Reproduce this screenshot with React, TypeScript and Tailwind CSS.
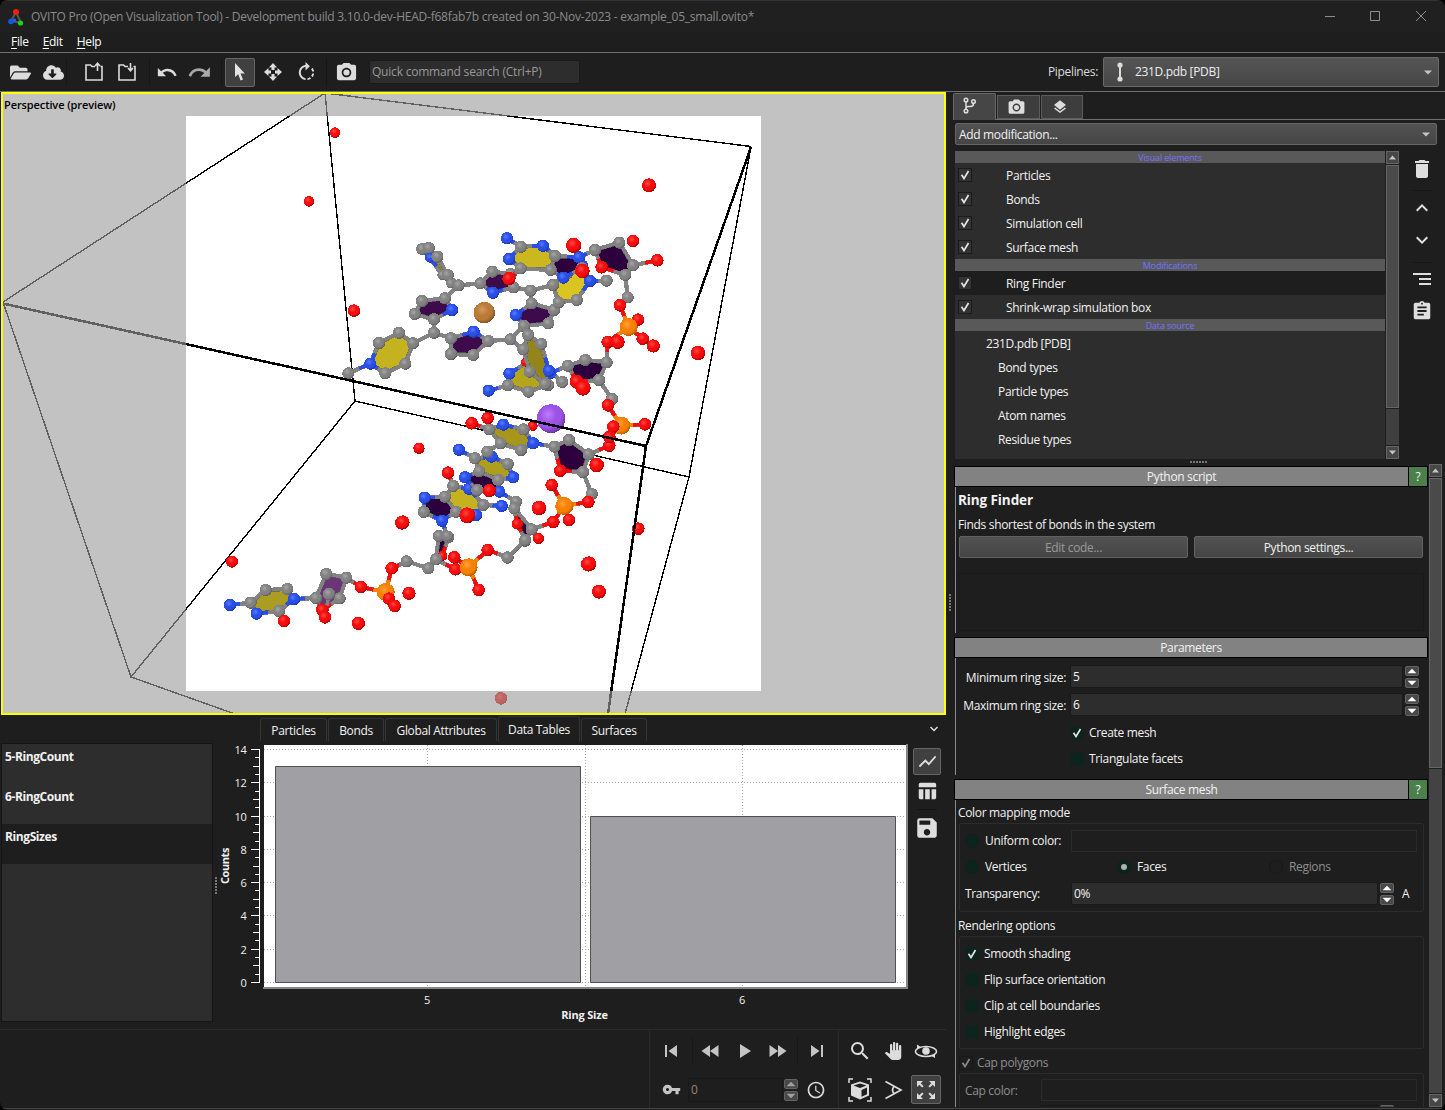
import React from "react";
import { FaFolderOpen, FaCloudDownloadAlt } from "react-icons/fa";
import {
  MdUndo, MdRedo, MdRotateRight, MdPhotoCamera, MdLayers, MdDelete, MdExpandLess, MdExpandMore,
  MdAssignment, MdShowChart, MdTableChart, MdSave, MdVpnKey, MdAccessTime, MdSearch, MdPanTool, MdZoomOutMap,
} from "react-icons/md";

/* ---------- molecule data ---------- */

const ELEMENTS: Record<string, { light: string; base: string; dark: string; r: number }> = {
  C: { light: "#a6a6a6", base: "#828282", dark: "#5e5e5e", r: 17.5 },
  N: { light: "#5a7cff", base: "#2a4ee8", dark: "#1c38ae", r: 17.5 },
  O: { light: "#ff4a44", base: "#f60c0c", dark: "#a80505", r: 18 },
  P: { light: "#ffa13c", base: "#f88000", dark: "#b85c00", r: 26 },
  Cu: { light: "#d69a58", base: "#b87a36", dark: "#7e5222", r: 31 },
  Na: { light: "#c07cff", base: "#9c52e4", dark: "#6a34a2", r: 42 },
};

type Fragment = { at: [number, number]; atoms: string; bonds: string; rings: string[] };

const FRAGMENTS: Fragment[] = [
  /* terminal cytidine and its backbone */
  {
    at: [210, 520],
    atoms:
      "N 60 255;C 122 248;C 167 210;C 232 207;C 207 273;N 140 281;N 252 237;O 222 303;C 318 234;O 337 270;C 349 162;C 389 235;C 409 173;C 357 222;O 345 292;O 453 201;O 545 145;C 590 124;C 655 145;P 527 216;O 537 236;O 554 258;O 597 220 19;O 445 310 19;O 66 125 17;O 576 8 20",
    bonds: "0-1 1-2 2-3 3-6 6-4 4-5 5-1 4-7 6-8 8-10 10-12 12-11 11-9 8-9 13-14 12-15 15-19 19-16 16-17 17-18 19-20 19-21 11-13",
    rings: ["#ab9c22 1 2 3 6 4 5", "#6a3678 8 10 12 11 9"],
  },
  {
    at: [210, 520],
    atoms:
      "C 655 145;O 697 108 14;C 715 52;C 687 48;C 678 118;O 736 148;O 733 112;P 776 142;O 806 210;O 833 90;C 893 112;C 945 62",
    bonds: "0-4 1-2 2-3 3-4 1-4 4-5 5-7 6-7 7-8 7-9 9-10 10-11",
    rings: ["#2c003c 2 3 4 1"],
  },
  /* lower stacked guanine */
  {
    at: [400, 400],
    atoms:
      "O 144 218;C 160 258;N 207 266;C 250 315;N 305 318;N 228 345;C 168 335;C 135 290;N 74 293;C 71 336;N 126 362;C 142 408 16",
    bonds: "0-1 1-2 2-3 3-4 3-5 5-6 6-7 7-1 7-8 8-9 9-10 10-6 10-11",
    rings: ["#c4b21e 1 2 3 5 6 7", "#2c003c 7 8 9 10 6"],
  },
  {
    at: [400, 400],
    atoms:
      "O 352 372 16;C 348 305;C 343 325;C 376 420;C 395 388;O 460 366;C 322 473;O 415 415 16;N 298 275",
    bonds: "8-1 1-2 2-0 0-3 3-4 4-2 4-5 3-6",
    rings: ["#2c003c 2 4 3 0"],
  },
  /* middle stacked adenine */
  {
    at: [400, 400],
    atoms:
      "N 177 149;C 225 175;N 275 170;C 323 192;N 340 232;C 295 240;C 238 214;N 195 232;C 232 270;N 298 275;O 268 272 19;O 202 346 23;O 8 367 20",
    bonds: "0-1 1-2 2-3 3-4 4-5 5-6 6-1 6-7 7-8 8-9 9-5",
    rings: ["#ad9e1e 1 2 3 4 5 6", "#2c003c 6 7 8 9 5"],
  },
  /* upper cytosine with sugar and phosphates */
  {
    at: [400, 400],
    atoms:
      "O 398 78 14;O 215 70;C 268 88;N 310 74;C 371 88;C 302 130;C 363 150;N 400 130;C 262 155;O 263 54;C 463 140;O 481 212;C 507 120;C 549 216;C 566 163;O 628 137;C 575 282;O 565 306;P 493 318;O 455 255;O 507 360;O 460 366;O 590 195 21;O 417 324 21;O 57 145 16",
    bonds: "0-4 1-2 2-3 3-4 4-7 7-6 6-5 5-2 5-8 7-10 10-12 12-14 14-13 13-11 11-10 14-15 13-16 16-17 17-18 18-19 18-20 18-21",
    rings: ["#a6971c 2 3 4 7 6 5", "#2c003c 10 12 14 13 11"],
  },
  /* lower right nucleotide of the upper strand */
  {
    at: [480, 220],
    atoms:
      "N 26 512;N 88 461;C 84 496;C 140 428 14;C 204 495;C 145 515;N 210 460;C 264 437;O 290 485 20;C 316 420;C 380 427;C 357 480;O 309 504 22;C 396 537;O 384 556;O 495 613;P 424 617;O 400 620;O 388 651;O 383 366;O 136 427 12",
    bonds: "0-2 1-2 1-3 3-6 6-4 4-5 5-2 6-7 7-9 9-10 10-11 11-8 8-7 11-13 13-14 14-16 16-15 16-17 16-18 10-19",
    rings: ["#b5a51c 2 1 3 6 4 5", "#2c003c 7 9 10 11 8"],
  },
  /* pyridyl on the right */
  {
    at: [480, 220],
    atoms: "C 262 160;N 308 135 15;C 219 195;C 236 247;C 290 240;N 330 183;C 380 182",
    bonds: "0-2 2-3 3-4 4-5 5-1 1-0 5-6",
    rings: ["#d8c522 0 2 3 4 5 1"],
  },
  /* porphyrin core */
  {
    at: [340, 220],
    atoms:
      "C 25 460;N 91 431;C 117 369;C 177 338;C 219 370;C 196 431;C 136 460;C 282 338;C 282 298;C 224 282;C 246 243;C 315 235;N 336 270;C 356 196;C 421 190;C 457 155;C 512 162;C 521 202;N 459 218;C 333 355;N 401 335;C 445 363;C 400 405;C 333 402;C 511 358;C 572 212;C 575 250;N 527 285;C 642 270;C 625 310;C 552 318;C 639 195;C 656 247",
    bonds:
      "0-1 1-2 2-3 3-4 4-5 5-6 6-1 4-7 7-8 8-9 9-10 10-11 11-12 12-8 11-13 13-14 14-15 15-16 16-17 17-18 18-14 7-19 19-20 20-21 21-22 22-23 23-19 21-24 17-25 25-26 26-27 26-28 28-29 29-30 30-27 30-24 25-31 32-28",
    rings: [
      "#c4b21e 1 2 3 4 5 6", "#3d0a4c 8 9 10 11 12", "#3d0a4c 14 15 16 17 18", "#3d0a4c 19 20 21 22 23", "#3d0a4c 26 27 30 29 28",
    ],
  },
  {
    at: [340, 220],
    atoms: "C 247 87;C 266 84;N 270 113 14;C 292 110;C 307 165 14;C 323 165;C 333 190 14;C 356 196",
    bonds: "0-1 0-2 1-3 2-4 3-5 4-5 5-7 6-7",
    rings: ["#9c8c16 2 3 5 4"],
  },
  /* guanosine at the top */
  {
    at: [480, 220],
    atoms:
      "N 81 55;C 123 80;N 189 77;C 225 108;C 212 150;C 122 145;N 87 117;O 87 176 19;N 297 112;C 306 145;N 250 173;C 345 90;O 365 142;C 436 165;C 418 68;C 459 136;O 532 121;C 443 232;O 420 256;O 474 299;P 446 321;O 488 356;O 383 366;O 413 366 20;O 520 378 19;O 281 76 22;O 459 63;O 307 153 21",
    bonds: "0-1 1-2 2-3 3-4 4-5 5-6 6-1 5-7 3-8 8-9 9-10 10-4 8-11 11-14 14-15 15-13 13-12 12-11 15-16 13-17 17-18 18-20 20-19 20-21 20-22",
    rings: ["#cab81e 1 2 3 4 5 6", "#2c003c 3 8 9 10 4", "#2c003c 11 14 15 13 12"],
  },
  /* pyridyl seen edge-on */
  {
    at: [480, 220],
    atoms: "C 91 358;C 130 388;C 145 345;C 184 372;C 149 455;C 195 492;N 207 452;C 247 486",
    bonds: "0-1 1-2 2-3 3-6 6-5 5-4 4-1 6-7",
    rings: ["#94851a 1 2 3 6 5 4"],
  },
  /* free ions and solvent */
  {
    at: [0, 0],
    atoms:
      "Cu 1453 938;Na 1653 1256;O 1005 398 15;O 927 604 15;O 1947 556 20;O 1062 932;O 2094 1059 21;O 1797 1775 20;O 1766 1692 22;O 1915 1586;O 1503 2095 18;O 1257 1344 15",
    bonds: "",
    rings: [],
  },
];

function parseAtoms(source: string) {
  return source.split(";").map((entry) => {
    const [el, x, y, r] = entry.split(" ");
    return { el, x: Number(x), y: Number(y), r: r ? Number(r) : ELEMENTS[el].r };
  });
}

function MoleculeFragment({ fragment }: { fragment: Fragment }) {
  const atoms = parseAtoms(fragment.atoms);
  const bonds = fragment.bonds ? fragment.bonds.split(" ").map((b) => b.split("-").map(Number)) : [];
  return (
    <g transform={`translate(${fragment.at[0]} ${fragment.at[1]}) scale(0.33333)`}>
      {fragment.rings.map((ring, i) => {
        const [fill, ...ids] = ring.split(" ");
        return <polygon key={i} fill={fill} points={ids.map((id) => `${atoms[+id].x},${atoms[+id].y}`).join(" ")} />;
      })}
      {bonds.map(([a, b], i) => {
        const p = atoms[a], q = atoms[b];
        const mx = (p.x + q.x) / 2, my = (p.y + q.y) / 2;
        return (
          <g key={i}>
            <g strokeWidth="13" strokeOpacity="0.75">
              <line x1={p.x} y1={p.y} x2={mx} y2={my} stroke={ELEMENTS[p.el].dark} />
              <line x1={mx} y1={my} x2={q.x} y2={q.y} stroke={ELEMENTS[q.el].dark} />
            </g>
            <line x1={p.x} y1={p.y} x2={mx} y2={my} stroke={ELEMENTS[p.el].base} strokeWidth="10" />
            <line x1={mx} y1={my} x2={q.x} y2={q.y} stroke={ELEMENTS[q.el].base} strokeWidth="10" />
          </g>
        );
      })}
      {atoms.map((a, i) => (
        <circle key={i} cx={a.x} cy={a.y} r={a.r + 1} fill={`url(#atom-${a.el})`} />
      ))}
    </g>
  );
}

function Viewport() {
  return (
    <div className="relative ml-px h-[623px] w-[945px] border-2 border-[#ffff00] bg-white">
      <svg className="block h-[619px] w-[941px]" viewBox="3 94 941 619" shapeRendering="crispEdges">
        <defs>
          {Object.entries(ELEMENTS).map(([el, c]) => (
            <radialGradient key={el} id={`atom-${el}`} cx="0.4" cy="0.36" r="0.66">
              <stop offset="0" stopColor={c.light} />
              <stop offset="0.45" stopColor={c.base} />
              <stop offset="0.7" stopColor={c.base} />
              <stop offset="1" stopColor={c.dark} />
            </radialGradient>
          ))}
        </defs>
        <g stroke="#000" strokeWidth="1.4" fill="none">
          <path d="M3 302L325 93L751 146.500M325 93L355 401L689 477L751 147M3 302L131 677L355 401M131 677L235 714M689 477L625 714" />
        </g>
        {FRAGMENTS.map((f, i) => (
          <MoleculeFragment key={i} fragment={f} />
        ))}
        <path d="M3 303.500L646 446L751 147M646 446L608 714" stroke="#000" strokeWidth="2.500" fill="none" />
        <path d="M3 94H944V713H3ZM186 116V691H761V116Z" fillRule="evenodd" fill="rgba(156,156,156,0.616)" />
      </svg>
      <span className="absolute left-[1px] top-[3px] text-[11px] font-semibold leading-4 tracking-[-0.100px] text-black">
        Perspective (preview)
      </span>
    </div>
  );
}

/* ---------- small widgets ---------- */

function Check({ on, tone = "list" }: { on?: boolean; tone?: "list" | "green" | "off" }) {
  const bg =
    tone === "green" ? "bg-[#0b241e] border-[#16201d]" : tone === "off" ? "bg-[#1e1e1e] border-[#191919]" : "bg-[#333] border-[#1b1b1b]";
  return (
    <span className={`flex size-[14px] shrink-0 items-center justify-center border ${bg}`}>
      {on && (
        <svg width="10" height="10" viewBox="0 0 10 10">
          <path d="M1.500 4.800L4 8.500L8.500 1" fill="none" stroke={tone === "off" ? "#8a8a8a" : "#e4e4e4"} strokeWidth="1.700" />
        </svg>
      )}
    </span>
  );
}

function Radio({ on, off }: { on?: boolean; off?: boolean }) {
  return (
    <span
      className={`flex size-[14px] shrink-0 items-center justify-center rounded-full border ${
        off ? "border-[#191919] bg-[#1e1e1e]" : "border-[#12201c] bg-[#0b241e]"
      }`}
    >
      {on && <span className="size-[6px] rounded-full bg-[#a9b3b0]" />}
    </span>
  );
}

function Spin({ dim }: { dim?: boolean }) {
  const fill = dim ? "#a0a0a0" : "#fff";
  return (
    <span className="flex w-[14px] shrink-0 flex-col gap-[2px]">
      {["M1 7L6 2L11 7Z", "M1 2L6 7L11 2Z"].map((d) => (
        <span key={d} className="flex h-[10px] items-center justify-center rounded-[2px] border border-[#636363] bg-[#484848]">
          <svg width="12" height="8" viewBox="0 0 12 9"><path d={d} fill={fill} /></svg>
        </span>
      ))}
    </span>
  );
}

function ScrollBtn({ down }: { down?: boolean }) {
  return (
    <span className="flex size-[13px] shrink-0 items-center justify-center border border-[#666] bg-[#474747]">
      <svg width="7" height="5" viewBox="0 0 7 5"><path d={down ? "M0 .5H7L3.500 4.500Z" : "M0 4.500H7L3.500 .5Z"} fill="#c4c4c4" /></svg>
    </span>
  );
}

function Caret() {
  return <svg width="8" height="5" viewBox="0 0 8 5"><path d="M0 .5H8L4 4.500Z" fill="#c4c4c4" /></svg>;
}

function Grip({ vertical }: { vertical?: boolean }) {
  return (
    <span className={`flex gap-px ${vertical ? "flex-col" : ""}`}>
      {[0, 1, 2, 3, 4, 5].map((i) => <span key={i} className="size-[2px] bg-[#777]" />)}
    </span>
  );
}

function Sep({ className = "" }: { className?: string }) {
  return <span className={`h-7 w-px shrink-0 bg-[#171717] ${className}`} />;
}

function Slot({ w, children }: { w: string; children: React.ReactNode }) {
  return <span className={`flex h-full shrink-0 items-center justify-center ${w}`}>{children}</span>;
}

/* ---------- header bars ---------- */

function TitleBar() {
  return (
    <div className="flex h-[31px] items-center bg-[#202020] text-[#8b8b8b]">
      <svg className="ml-2" width="16" height="18" viewBox="0 0 16 18">
        <path d="M8 4L3 13L13 15Z" stroke="#555" strokeWidth="2" fill="none" />
        <circle cx="8" cy="4" r="3" fill="#f21d0c" />
        <circle cx="3" cy="13.500" r="2.800" fill="#0a5cf0" />
        <circle cx="12.500" cy="15" r="2.600" fill="#17d61c" />
        <circle cx="6.500" cy="12" r="1.600" fill="#2a62e0" />
      </svg>
      <span className="ml-[7px] grow tracking-[-0.235px]">
        OVITO Pro (Open Visualization Tool) - Development build 3.10.0-dev-HEAD-f68fab7b created on 30-Nov-2023 - example_05_small.ovito*
      </span>
      <svg className="mb-[2px] mr-[17px]" width="104" height="12" viewBox="0 0 104 12" fill="none" stroke="#8e8e8e">
        <path d="M1 6.500H11M46.500 1.500H55.500V10.500H46.500ZM92 1L102 11M102 1L92 11" />
      </svg>
    </div>
  );
}

function ArrowFolder({ down }: { down?: boolean }) {
  return (
    <svg width="20" height="20" viewBox="0 0 20 20" fill="none" stroke="#dcdcdc" strokeWidth="1.600">
      <path d="M11 4.500H8L6.500 3H2V18H18V4.500H16.500" />
      <path d={down ? "M13.500 1V8.500M11 6L13.500 8.700L16 6" : "M13.500 9V1.500M11 4L13.500 1.300L16 4"} />
    </svg>
  );
}

function Toolbar() {
  return (
    <div className="flex h-[39px] items-center border-t border-[#6e6e6e] text-[#dcdcdc]">
      <Slot w="w-[41px]"><FaFolderOpen size={21} /></Slot>
      <Slot w="w-[25px]"><FaCloudDownloadAlt size={21} /></Slot>
      <Sep className="mr-4" />
      <Slot w="w-[22px]"><ArrowFolder /></Slot>
      <Slot w="w-[44px]"><ArrowFolder down /></Slot>
      <Sep className="mr-[6px]" />
      <Slot w="w-[22px]"><MdUndo size={25} /></Slot>
      <Slot w="w-[43px]"><MdRedo size={25} className="text-[#a8a8a8]" /></Slot>
      <Sep className="mr-[3px]" />
      <span className="flex h-[29px] w-[30px] items-center justify-center rounded-[2px] border border-[#666] bg-[#404040]">
        <svg width="12" height="18" viewBox="0 0 12 18"><path d="M1 0V14L4.200 11.200L6.600 17.500L9 16.500L6.500 10.500H10.800Z" fill="#e4e4e4" /></svg>
      </span>
      <Slot w="w-[36px]">
        <svg width="20" height="20" viewBox="0 0 20 20" fill="#dcdcdc">
          <path d="M10 1L14 5.500H11.500V8H8.500V5.500H6ZM10 19L6 14.500H8.500V12H11.500V14.500H14ZM1 10L5.500 6V8.500H8V11.500H5.500V14ZM19 10L14.500 14V11.500H12V8.500H14.500V6Z" />
        </svg>
      </Slot>
      <Slot w="w-[30px]"><MdRotateRight size={23} /></Slot>
      <Sep className="ml-[5px]" />
      <Slot w="w-[32px]"><MdPhotoCamera size={23} className="ml-[6px]" /></Slot>
      <div className="ml-[10px] flex h-6 w-[211px] items-center rounded-[2px] border border-[#191919] bg-[#2d2d2d] pl-[2px] tracking-[-0.210px] text-[#999]">
        Quick command search (Ctrl+P)
      </div>
      <span className="grow" />
      <span className="mr-[5px]">Pipelines:</span>
      <div className="mr-[6px] flex h-[30px] w-[336px] items-center rounded-[2px] border border-[#6a6a6a] bg-linear-to-b from-[#555] to-[#464646] pl-[13px] pr-[6px] text-[#eee]">
        <svg width="6" height="20" viewBox="0 0 6 20" fill="#ddd"><circle cx="3" cy="3" r="2.600" /><circle cx="3" cy="17" r="2.600" /><path d="M2 3H4V17H2Z" /></svg>
        <span className="ml-3 grow">231D.pdb [PDB]</span>
        <Caret />
      </div>
    </div>
  );
}

/* ---------- data inspector ---------- */

const TICKS = Array.from({ length: 29 }, (_, i) => i);

function Plot() {
  const y = (v: number) => Math.round(982 - v * 16.640) + 0.5;
  return (
    <svg className="block h-[284px] w-[692px] shrink-0" viewBox="218 742 692 284" fontSize="11" fill="#f0f0f0">
      <rect x="264" y="745" width="642" height="242" fill="#fff" />
      <path d="M263 988H907V744" fill="none" stroke="#858585" strokeWidth="2" />
      <g stroke="#a0a0a0" strokeDasharray="1 2" shapeRendering="crispEdges">
        {[0, 2, 4, 6, 8, 10, 12, 14].map((v) => <path key={v} d={`M264 ${y(v)}H905`} />)}
        <path d="M427.500 745V986M585.500 745V986M742.500 745V986" />
      </g>
      <g fill="#a09fa4" stroke="#505050">
        <path d="M275.500 766.500H580.500V982.500H275.500ZM590.500 816.500H895.500V982.500H590.500Z" />
      </g>
      <g stroke="#fff" shapeRendering="crispEdges">
        <path d="M259.500 749V983" />
        {TICKS.map((i) => (
          <path key={i} d={`M${i % 4 === 0 ? 251 : i % 2 === 0 ? 253 : 255} ${y(i / 2)}H259`} />
        ))}
      </g>
      {[0, 2, 4, 6, 8, 10, 12, 14].map((v) => (
        <text key={v} x="246.500" y={y(v) + 4.500} textAnchor="end">{v}</text>
      ))}
      <text x="427" y="1004" textAnchor="middle">5</text>
      <text x="742" y="1004" textAnchor="middle">6</text>
      <text x="584.500" y="1019" textAnchor="middle" fontWeight="700" letterSpacing="-0.2">Ring Size</text>
      <text transform="translate(229 866) rotate(-90)" textAnchor="middle" fontWeight="700" letterSpacing="-0.4">Counts</text>
    </svg>
  );
}

function InspectorTab({ label, w, active }: { label: string; w: string; active?: boolean }) {
  return (
    <div
      className={`flex items-center justify-center rounded-t-[3px] border border-b-0 border-[#343434] ${w} ${
        active ? "h-[26px] self-start" : "mb-px h-[23px] pt-px"
      }`}
    >
      {label}
    </div>
  );
}

function DataInspector() {
  return (
    <div className="flex h-[314px] flex-col">
      <div className="flex h-[27px] items-end gap-px pl-[260px] pt-px">
        <InspectorTab label="Particles" w="w-[67px]" />
        <InspectorTab label="Bonds" w="w-[56px]" />
        <InspectorTab label="Global Attributes" w="w-[112px]" />
        <InspectorTab label="Data Tables" w="w-[82px]" active />
        <InspectorTab label="Surfaces" w="w-[66px]" />
        <span className="grow" />
        <svg className="mb-[9px] mr-[7px]" width="10" height="8" viewBox="0 0 10 8"><path d="M1.500 2L5 5.500L8.500 2" stroke="#ddd" strokeWidth="1.500" fill="none" /></svg>
      </div>
      <div className="flex grow">
        <div className="ml-px mt-px flex h-[279px] w-[212px] flex-col border border-[#151515] bg-[#2d2d2d] font-bold tracking-[-0.400px]">
          {["5-RingCount", "6-RingCount", "RingSizes"].map((name, i) => (
            <div key={name} className={`h-10 pl-[3px] pt-1 leading-[18px] ${i === 2 ? "bg-[#1e1e1e]" : ""}`}>{name}</div>
          ))}
        </div>
        <div className="flex w-[5px] shrink-0 items-center justify-center"><Grip vertical /></div>
        <Plot />
        <div className="ml-[3px] mt-[6px] flex flex-col items-center text-[#dedede]">
          <span className="flex h-[27px] w-[28px] items-center justify-center rounded-[2px] border border-[#666] bg-[#404040]">
            <MdShowChart size={21} />
          </span>
          <MdTableChart size={22} className="mt-[5px]" />
          <span className="mt-[7px] h-px w-5 bg-[#151515]" />
          <MdSave size={26} className="mt-[5px]" />
        </div>
      </div>
    </div>
  );
}

/* ---------- animation and viewport controls ---------- */

function PlayGlyph({ d }: { d: string }) {
  return <svg width="18" height="14" viewBox="0 0 18 14"><path d={d} fill="#c4c4c4" /></svg>;
}

function BottomBar() {
  return (
    <div className="flex h-[79px] border-t border-[#2b2b2b]">
      <div className="w-[650px] border-r border-[#2b2b2b]" />
      <div className="w-[189px] border-r border-[#2b2b2b] text-[#c4c4c4]">
        <div className="flex h-[41px] items-center">
          <Slot w="w-[42px]"><PlayGlyph d="M3 1H5V13H3ZM15 1V13L6.500 7Z" /></Slot>
          <Sep className="h-5" />
          <Slot w="w-[34px]"><PlayGlyph d="M9 1V13L.5 7ZM17.500 1V13L9 7Z" /></Slot>
          <Slot w="w-[35px]"><PlayGlyph d="M4 0V14L15 7Z" /></Slot>
          <Slot w="w-[31px]"><PlayGlyph d="M9 1V13L17.500 7ZM.5 1V13L9 7Z" /></Slot>
          <Slot w="w-[4px]">{null}</Slot>
          <Sep className="h-5" />
          <Slot w="w-[38px]"><PlayGlyph d="M13 1H15V13H13ZM3 1V13L11.500 7Z" /></Slot>
        </div>
        <div className="flex h-[37px] items-center">
          <Slot w="w-[38px]"><MdVpnKey size={19} className="ml-1" /></Slot>
          <div className="flex h-6 w-[95px] items-center rounded-[2px] border border-[#181818] pl-[2px] text-[#9c8468]">0</div>
          <span className="ml-px flex"><Spin dim /></span>
          <Slot w="w-[36px]"><MdAccessTime size={20} className="text-[#dcdcdc]" /></Slot>
        </div>
      </div>
      <div className="text-[#dcdcdc]">
        <div className="flex h-[41px] items-center">
          <Slot w="w-[42px]"><MdSearch size={24} /></Slot>
          <Slot w="w-[24px]"><MdPanTool size={18} /></Slot>
          <Slot w="w-[41px]">
            <svg width="24" height="16" viewBox="0 0 24 16" fill="none" stroke="#dcdcdc">
              <ellipse cx="12" cy="8.500" rx="10.500" ry="5" strokeWidth="1.500" />
              <circle cx="12" cy="8" r="3.800" fill="#dcdcdc" stroke="none" />
              <path d="M3 1.500L7.500 4.500L3 5.500ZM21 15L16.500 12.500L21 11Z" fill="#dcdcdc" stroke="none" />
            </svg>
          </Slot>
        </div>
        <div className="flex h-[37px] items-center">
          <Slot w="w-[42px]">
            <svg width="24" height="24" viewBox="0 0 24 24" fill="none" stroke="#dcdcdc" strokeWidth="1.500">
              <path d="M1 5V1H5M19 1H23V5M23 19V23H19M5 23H1V19" />
              <path d="M12 3.500L21 6.500V17.500L12 21.500L3 17.500V6.500Z" fill="#dcdcdc" stroke="none" />
              <path d="M5.500 7.500L12 5.500L18.500 7.500L12 10ZM13.500 12L19 9.500V16.300L13.500 18.800Z" fill="#1e1e1e" stroke="none" />
            </svg>
          </Slot>
          <Slot w="w-[24px]">
            <svg width="19" height="20" viewBox="0 0 19 20" fill="none" stroke="#dcdcdc" strokeWidth="1.700">
              <path d="M1.500 1.500L17 10L1.500 18.500M10 6.500Q7 10 10 13.500" />
            </svg>
          </Slot>
          <Slot w="w-[41px]">
            <span className="flex h-[29px] w-[30px] items-center justify-center rounded-[2px] border border-[#666] bg-[#404040]">
              <MdZoomOutMap size={24} />
            </span>
          </Slot>
        </div>
      </div>
    </div>
  );
}

/* ---------- command panel ---------- */

const PIPELINE: { kind: "head" | "item" | "source" | "child"; label: string; selected?: boolean }[] = [
  { kind: "head", label: "Visual elements" },
  { kind: "item", label: "Particles" },
  { kind: "item", label: "Bonds" },
  { kind: "item", label: "Simulation cell" },
  { kind: "item", label: "Surface mesh" },
  { kind: "head", label: "Modifications" },
  { kind: "item", label: "Ring Finder", selected: true },
  { kind: "item", label: "Shrink-wrap simulation box" },
  { kind: "head", label: "Data source" },
  { kind: "source", label: "231D.pdb [PDB]" },
  { kind: "child", label: "Bond types" },
  { kind: "child", label: "Particle types" },
  { kind: "child", label: "Atom names" },
  { kind: "child", label: "Residue types" },
];

function PipelineList() {
  return (
    <div className="flex h-[308px] w-[445px]">
      <div className="w-[430px] overflow-hidden bg-[#2d2d2d]">
        {PIPELINE.map((row) => {
          if (row.kind === "head")
            return (
              <div key={row.label} className="flex h-3 items-center justify-center bg-[#595959] pt-px text-[9px] tracking-[-0.150px] text-[#7474ff]">
                {row.label}
              </div>
            );
          const pad = row.kind === "source" ? "pl-[31px]" : row.kind === "child" ? "pl-[43px]" : "pl-[3px]";
          return (
            <div key={row.label} className={`flex h-6 items-center ${pad} ${row.selected ? "bg-[#1e1e1e]" : ""}`}>
              {row.kind === "item" && <span className="mr-[34px]"><Check on /></span>}
              <span className="pt-[2px]">{row.label}</span>
            </div>
          );
        })}
      </div>
      <div className="ml-[1px] flex w-[13px] flex-col gap-px bg-[#1e1e1e]">
        <ScrollBtn />
        <span className="h-[243px] border border-[#666] bg-[#4a4a4a]" />
        <span className="grow bg-[#3f3f3f]" />
        <ScrollBtn down />
      </div>
    </div>
  );
}

function RollupHead({ label, help }: { label: string; help?: boolean }) {
  return (
    <div className="flex h-[21px] shrink-0 gap-px border border-black bg-black text-[#f2f2f2]">
      <div className="flex grow items-center justify-center bg-[#828282]">{label}</div>
      {help && <div className="flex w-[18px] items-center justify-center bg-[#4b7f4b]">?</div>}
    </div>
  );
}

function PushButton({ label, off }: { label: string; off?: boolean }) {
  return (
    <div
      className={`flex h-[22px] flex-1 items-center justify-center rounded-[2px] border border-[#626262] bg-linear-to-b from-[#525252] to-[#454545] pt-[2px] ${
        off ? "text-[#999]" : ""
      }`}
    >
      {label}
    </div>
  );
}

function Field({ value, className = "" }: { value: string; className?: string }) {
  return (
    <div className={`flex h-[23px] items-center rounded-[2px] border border-[#191919] bg-[#2d2d2d] pl-[2px] pt-px ${className}`}>{value}</div>
  );
}

function Rollups() {
  return (
    <div className="flex h-[641px] w-[474px] flex-col overflow-hidden">
      <RollupHead label="Python script" help />
      <div className="ml-px flex h-[146px] shrink-0 flex-col border-l border-[#8a8a8a] pl-[2px] pr-1">
        <div className="mt-[3px] h-5 text-[13.500px] font-bold leading-5 tracking-[-0.100px]">Ring Finder</div>
        <div className="mt-[6px] h-[17px] leading-[17px]">Finds shortest of bonds in the system</div>
        <div className="ml-px mt-[3px] flex gap-[6px] pr-px">
          <PushButton label="Edit code..." off />
          <PushButton label="Python settings..." />
        </div>
        <div className="mt-[15px] h-[58px] border border-[#191919]" />
      </div>
      <div className="h-[4px] shrink-0" />
      <RollupHead label="Parameters" />
      <div className="ml-px h-[117px] shrink-0 border-l border-[#8a8a8a] pt-[7px]">
        {[["Minimum ring size:", "5"], ["Maximum ring size:", "6"]].map(([label, value]) => (
          <div key={label} className="mb-[5px] flex items-center">
            <span className="mr-[4px] w-[110px] pt-[2px] text-right">{label}</span>
            <Field value={value} className="mr-[2px] w-[333px]" />
            <Spin />
          </div>
        ))}
        <div className="ml-[114px] flex flex-col">
          <div className="mt-[4px] flex h-4 items-center gap-[5px]"><Check tone="green" on />Create mesh</div>
          <div className="mt-[10px] flex h-4 items-center gap-[5px]"><Check tone="green" />Triangulate facets</div>
        </div>
      </div>
      <div className="h-[4px] shrink-0" />
      <RollupHead label="Surface mesh" help />
      <div className="ml-px flex grow flex-col border-l border-[#8a8a8a] pl-[2px] pr-1">
        <div className="mt-[4px] h-[18px] shrink-0 leading-[18px]">Color mapping mode</div>
        <div className="ml-px mt-px flex h-[89px] shrink-0 flex-col rounded-[2px] border border-[#2c2c2c] pl-[5px] pr-[6px] pt-[5px]">
          <div className="flex h-[23px] items-center">
            <Radio /><span className="ml-[6px] w-[86px]">Uniform color:</span>
            <div className="h-[22px] grow border border-[#2a2a2a]" />
          </div>
          <div className="flex h-[29px] items-center">
            <Radio /><span className="ml-[6px] w-[132px]">Vertices</span>
            <Radio on /><span className="ml-[6px] w-[132px]">Faces</span>
            <Radio off /><span className="ml-[6px] text-[#8e8e8e]">Regions</span>
          </div>
          <div className="flex h-[25px] items-center">
            <span className="w-[106px]">Transparency:</span>
            <Field value="0%" className="mr-[2px] w-[307px]" />
            <Spin />
            <span className="ml-2">A</span>
          </div>
        </div>
        <div className="mt-[5px] h-[18px] shrink-0 leading-[18px]">Rendering options</div>
        <div className="ml-px mt-px flex h-[113px] shrink-0 flex-col rounded-[2px] border border-[#2c2c2c] pl-[5px] pt-1">
          {["Smooth shading", "Flip surface orientation", "Clip at cell boundaries", "Highlight edges"].map((label, i) => (
            <div key={label} className="flex h-[26px] items-center gap-[5px]"><Check tone="green" on={i === 0} />{label}</div>
          ))}
        </div>
        <div className="ml-px mt-[5px] flex h-[17px] shrink-0 items-center gap-[4px] text-[#8e8e8e]"><Check tone="off" on />Cap polygons</div>
        <div className="ml-px mt-[2px] h-[60px] shrink-0 rounded-t-[2px] border border-[#2c2c2c] pl-[5px] pr-[6px] pt-[5px]">
          <div className="flex items-center text-[#8e8e8e]">
            <span className="w-[76px] pt-[2px]">Cap color:</span>
            <div className="h-[22px] grow border border-[#2a2a2a]" />
          </div>
          <div className="mt-1 flex items-start pl-[76px]">
            <div className="mr-[2px] h-[22px] w-[337px] border border-[#151515]" />
            <Spin dim />
          </div>
        </div>
      </div>
    </div>
  );
}

function CommandPanel() {
  return (
    <div className="flex w-[492px] flex-col pt-px">
      <div className="flex h-[27px] text-[#dedede]">
        <div className="flex h-[27px] w-[43px] items-center rounded-t-[2px] border border-b-0 border-[#686868] bg-[#464646] pl-[9px]">
          <svg className="mb-1" width="14" height="17" viewBox="0 0 14 17" fill="none" stroke="#dedede" strokeWidth="1.500">
            <circle cx="3" cy="3" r="1.800" /><circle cx="3" cy="14" r="1.800" /><circle cx="10.500" cy="4.500" r="1.800" />
            <path d="M3 5V12M3 11Q3 9.500 5.500 9.500H7.500Q10.500 9.500 10.500 6.500" />
          </svg>
        </div>
        <div className="flex grow items-end border-b border-[#6e6e6e]">
          <div className="ml-px flex h-6 w-[43px] items-center justify-center border border-[#5c5c5c] bg-[#3d3d3d] pr-[5px]"><MdPhotoCamera size={19} /></div>
          <div className="ml-px flex h-6 w-[42px] items-center justify-center border border-[#5c5c5c] bg-[#3d3d3d] pr-1"><MdLayers size={16} /></div>
        </div>
      </div>
      <div className="ml-[2px] mt-[3px] flex h-[22px] w-[482px] items-center rounded-[2px] border border-[#666] bg-linear-to-b from-[#525252] to-[#454545] pl-[3px] pr-[6px]">
        <span className="grow pt-[2px]">Add modification...</span>
        <Caret />
      </div>
      <div className="ml-[2px] mt-[6px] flex">
        <PipelineList />
        <div className="flex w-[44px] flex-col items-center pt-[6px] text-[#dedede]">
          <MdDelete size={24} />
          <span className="mt-[9px] h-px w-5 bg-[#171717]" />
          <MdExpandLess size={24} className="mt-[5px]" />
          <MdExpandMore size={24} className="mt-[8px]" />
          <span className="mt-[10px] h-px w-5 bg-[#171717]" />
          <svg className="mt-[10px]" width="18" height="13" viewBox="0 0 18 13" fill="#dedede"><path d="M0 0H18V2H0ZM6 5H18V7H6ZM6 10H18V12H6Z" /></svg>
          <MdAssignment size={22} className="mt-[14px]" />
        </div>
      </div>
      <div className="flex h-[7px] w-[491px] items-center justify-center pb-px"><Grip /></div>
      <div className="ml-px flex h-[641px]">
        <Rollups />
        <div className="-mt-[2px] ml-[1px] flex h-[643px] w-[13px] shrink-0 flex-col gap-px">
          <ScrollBtn />
          <span className="h-[290px] border border-[#666] bg-[#4a4a4a]" />
          <span className="grow bg-[#434343]" />
          <ScrollBtn down />
        </div>
      </div>
    </div>
  );
}

export default function App() {
  return (
    <div className="h-[1110px] w-[1445px] bg-black">
      <div className="flex h-[1110px] w-[1445px] flex-col overflow-hidden rounded-lg border-t border-[#333] bg-[#1e1e1e] font-['Open_Sans','Noto_Sans',sans-serif] text-[12px] leading-4 tracking-[-0.330px] text-[#f2f2f2]">
        <TitleBar />
        <div className="flex h-5 items-center gap-[14px] pl-[11px] text-white">
          {["File", "Edit", "Help"].map((m) => (
            <span key={m}><span className="underline underline-offset-2">{m[0]}</span>{m.slice(1)}</span>
          ))}
        </div>
        <Toolbar />
        <div className="flex h-[1017px] border-t border-[#6e6e6e]">
          <div className="flex w-[946px] flex-col">
            <Viewport />
            <DataInspector />
            <BottomBar />
          </div>
          <div className="flex w-[7px] items-center justify-center pt-[4px]"><Grip vertical /></div>
          <CommandPanel />
        </div>
        <div className="h-px bg-[#444]" />
      </div>
    </div>
  );
}
